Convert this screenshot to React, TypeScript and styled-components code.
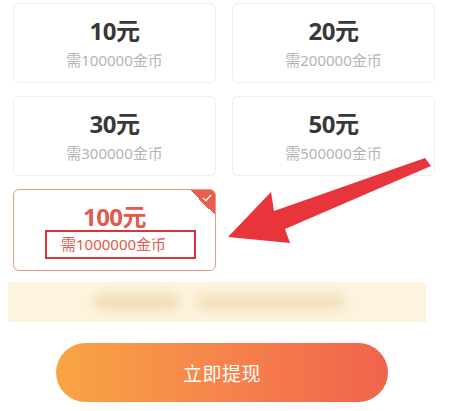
import React from "react"
import styled, { createGlobalStyle } from "styled-components"

const GlobalStyle = createGlobalStyle`
	html, body {
		margin: 0;
		padding: 0;
		background: #ffffff;
	}
	body {
		font-family: "Noto Sans", "Noto Sans CJK SC", sans-serif;
	}
`

interface IOption {
	amount: number
	coins: number
	selected?: boolean
}

const options: IOption[] = [
	{ amount: 10, coins: 100000 },
	{ amount: 20, coins: 200000 },
	{ amount: 30, coins: 300000 },
	{ amount: 50, coins: 500000 },
	{ amount: 100, coins: 1000000, selected: true },
]

export default function App() {
	return (
		<Page>
			<GlobalStyle />
			<Grid>
				{options.map((o) => (
					<Card key={o.amount} $selected={o.selected}>
						<Amount $selected={o.selected}>{o.amount}元</Amount>
						<Coins $selected={o.selected}>需{o.coins}金币</Coins>
						{o.selected && (
							<Corner>
								<svg width="10" height="8" viewBox="0 0 10 8">
									<path d="M1 4 L4 6.5 L9 1" fill="none" stroke="#fff" strokeWidth="1.4" />
								</svg>
							</Corner>
						)}
					</Card>
				))}
			</Grid>
			<Notice>
				<Blob $width={86} $tone="#efd9b0" />
				<Blob $width={150} $tone="#f1ddb7" />
			</Notice>
			<ButtonRow>
				<WithdrawButton>立即提现</WithdrawButton>
			</ButtonRow>
			<Arrow width="449" height="411" viewBox="0 0 449 411">
				<polygon
					points="228,237 271,192 274,211 425,158 431,166 285,229 290,243"
					fill="#e8353b"
				/>
			</Arrow>
		</Page>
	)
}

const Page = styled.div`
	position: relative;
	width: 449px;
	height: 411px;
	overflow: hidden;
	padding-top: 3px;
	box-sizing: border-box;
`
const Grid = styled.div`
	display: grid;
	grid-template-columns: 203px 203px;
	column-gap: 16px;
	row-gap: 13px;
	padding-left: 13px;
`
const Card = styled.div<{ $selected?: boolean }>`
	position: relative;
	box-sizing: border-box;
	height: ${(p) => (p.$selected ? "82px" : "80px")};
	border: 1px solid ${(p) => (p.$selected ? "#e9978b" : "#eeeeee")};
	border-radius: 6px;
	background: #fff;
	display: flex;
	flex-direction: column;
	align-items: center;
	overflow: hidden;
	padding-top: 10px;
`
const Amount = styled.div<{ $selected?: boolean }>`
	font-size: 24px;
	font-weight: 700;
	line-height: 34px;
	color: ${(p) => (p.$selected ? "#e35a4c" : "#383838")};
	letter-spacing: -0.5px;
`
const Coins = styled.div<{ $selected?: boolean }>`
	font-size: 15px;
	line-height: 17px;
	color: ${(p) => (p.$selected ? "#e35a4c" : "#b4b4b4")};
	margin-top: ${(p) => (p.$selected ? "-4px" : "4px")};
	padding: ${(p) => (p.$selected ? "4px 14px" : "0")};
	border: ${(p) => (p.$selected ? "2px solid #d8343c" : "none")};
	width: ${(p) => (p.$selected ? "151px" : "auto")};
	align-self: ${(p) => (p.$selected ? "flex-start" : "center")};
	margin-left: ${(p) => (p.$selected ? "31px" : "0")};
	box-sizing: border-box;
	white-space: nowrap;
`
const Corner = styled.div`
	position: absolute;
	top: 0;
	right: 0;
	width: 25px;
	height: 25px;
	background: linear-gradient(225deg, #ea5f4b 50%, transparent 50%);
	& svg {
		position: absolute;
		top: 4px;
		right: 3px;
	}
`
const Notice = styled.div`
	margin: 11px 0 0 8px;
	width: 418px;
	height: 40px;
	background: #fdf4de;
	display: flex;
	align-items: center;
	gap: 16px;
	padding-left: 86px;
	box-sizing: border-box;
	overflow: hidden;
`
const Blob = styled.span<{ $width: number; $tone: string }>`
	display: block;
	width: ${(p) => p.$width}px;
	height: 14px;
	border-radius: 7px;
	background: ${(p) => p.$tone};
	filter: blur(6px);
`
const ButtonRow = styled.div`
	display: flex;
	padding-left: 56px;
	margin-top: 21px;
`
const WithdrawButton = styled.button`
	width: 332px;
	height: 59px;
	border: none;
	border-radius: 30px;
	background: linear-gradient(90deg, #f9a544 0%, #f6874a 45%, #f0634d 100%);
	color: #fff;
	font-family: "Noto Sans CJK SC", sans-serif;
	font-size: 19px;
	letter-spacing: 0.5px;
	cursor: pointer;
`
const Arrow = styled.svg`
	position: absolute;
	left: 0;
	top: 0;
	pointer-events: none;
`
